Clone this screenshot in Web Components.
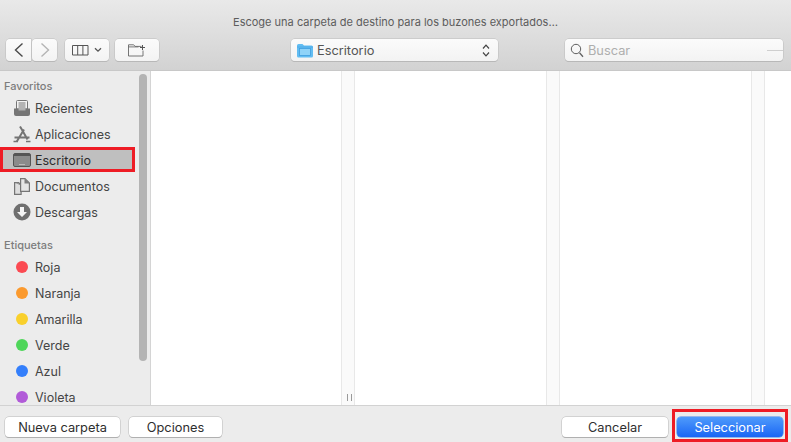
<!DOCTYPE html>
<html lang="es">
<head>
<meta charset="utf-8">
<title>Escoge una carpeta</title>
<style>
  html, body { margin: 0; height: 100%; }
  body { font-family: Inter, "Liberation Sans", sans-serif; overflow: hidden; }
</style>
</head>
<body>
<save-dialog title-text="Escoge una carpeta de destino para los buzones exportados…">
  <tool-bar slot="toolbar"></tool-bar>
  <side-bar slot="sidebar"></side-bar>
  <column-browser slot="content"></column-browser>
  <dialog-footer slot="footer"></dialog-footer>
</save-dialog>

<script>
const ICONS = {
    back: `<svg width="12" height="16" viewBox="0 0 12 16"><path d="M9.5 1.5 2.5 8l7 6.5" fill="none" stroke="#4a4a4a" stroke-width="1.4"/></svg>`,
    forward: `<svg width="12" height="16" viewBox="0 0 12 16"><path d="M2.500 1.500 9.500 8l-7 6.500" fill="none" stroke="#b4b4b4" stroke-width="1.4"/></svg>`,
    columns: `<svg width="17" height="11" viewBox="0 0 17 11"><path d="M.5.5h15.500v9.500H.5zM5.700.5v9.500M10.900.5v9.500" fill="none" stroke="#555" stroke-width="1"/></svg>`,
    chevron: `<svg width="8" height="6" viewBox="0 0 8 6"><path d="M1 1.200l3 3 3-3" fill="none" stroke="#555" stroke-width="1.3"/></svg>`,
    newFolder: `<svg width="18" height="13" viewBox="0 0 18 13"><path d="M.5 12V.8h5.200l1.400 1.600h6.400M.5 2.900h10M.5 12h14.500V6.500" fill="none" stroke="#666" stroke-width=".9"/><path d="M14.500 1v5M12 3.500h5" fill="none" stroke="#555" stroke-width="1"/></svg>`,
    folder: `<svg width="16" height="15" viewBox="0 0 16 15"><path d="M0 2.500Q0 1 1.500 1h4L7 2.500h7.500Q16 2.500 16 4v9q0 1.500-1.500 1.500h-13Q0 14.500 0 13z" fill="#62bdf2"/><path d="M0 4h16" stroke="#4aa6e4" stroke-width=".8"/><rect x="2.500" y="5.500" width="11" height="7" fill="#8fd3f8" stroke="#3f9fdf" stroke-width=".8"/></svg>`,
    updown: `<svg width="8" height="15" viewBox="0 0 8 15"><path d="M1 5.500 4 2.200l3 3.300M1 9.500l3 3.300 3-3.300" fill="none" stroke="#444" stroke-width="1.2"/></svg>`,
    search: `<svg width="14" height="15" viewBox="0 0 14 15"><circle cx="6" cy="6" r="4.700" fill="none" stroke="#5f5f5f" stroke-width="1"/><path d="M9.500 9.800 13 13.800" stroke="#5f5f5f" stroke-width="1.300"/></svg>`,
    recents: `<svg width="16" height="16" viewBox="0 0 16 16"><path d="M2.500 1.500Q2.500.5 3.500.5h9q1 0 1 1V9h-11z" fill="#f2f2f2" stroke="#757575"/><path d="M4.500 3h7M4.500 5h7M4.500 7h7" stroke="#757575"/><path d="M0 8.500h4.500v1.700h7V8.500H16v5.500q0 2-2 2H2q-2 0-2-2z" fill="#757575"/></svg>`,
    apps: `<svg width="18" height="17" viewBox="0 0 18 17"><path d="M7 .5 8.700 3.200 14.500 13.500M11 3.500 3.800 15.500M1.500 11.500h15" fill="none" stroke="#747474" stroke-width="2"/><path d="M.5 15.500h4.500M13 15.500h4.500" stroke="#747474" stroke-width="1.600"/></svg>`,
    desktop: `<svg width="18" height="14" viewBox="0 0 18 14"><rect x=".5" y=".5" width="17" height="13" rx="1.500" fill="#8b8b8b" stroke="#555"/><rect x="1" y="1" width="16" height="2" fill="#555"/><path d="M6.500 11.500h5" stroke="#e8e8e8" stroke-width="1" stroke-dasharray="1 1"/></svg>`,
    docs: `<svg width="16" height="17" viewBox="0 0 16 17"><path d="M.6 4.600h4l2.500 2.500v9.300H.6z" fill="#dedede" stroke="#757575" stroke-width="1.200"/><path d="M6.600 .6H11l4.400 4.400v8.400H6.600z" fill="#e6e6e6" stroke="#757575" stroke-width="1.200"/><path d="M10.500.5v5h5z" fill="#808080"/><path d="M.6 4.600h4v2.500h2.500z" fill="#808080"/></svg>`,
    downloads: `<svg width="18" height="18" viewBox="0 0 18 18"><circle cx="9" cy="9" r="8.500" fill="#6f6f6f"/><path d="M7 4h4v5h3l-5 5-5-5h3z" fill="#f4f4f4"/></svg>`
};

/** Frame of the sheet: toolbar on top, sidebar and columns, footer */
class SaveDialog extends HTMLElement {
    constructor() {
        super();
        this.attachShadow({ mode: "open" });
        this.shadowRoot.innerHTML = `
        <style>
          :host { display: flex; flex-direction: column; width: 791px; height: 442px; overflow: hidden; }
          header {
            height: 71px; box-sizing: border-box; flex: none;
            background: linear-gradient(#e9e9e9, #d2d2d2);
            border-bottom: 1px solid #c8c8c8;
          }
          .title {
            height: 39px; box-sizing: border-box; padding-top: 15px;
            text-align: center; font-size: 11px; line-height: 14px; color: #5c5c5c;
          }
          main { flex: 1; display: flex; min-height: 0; }
        </style>
        <header>
          <div class="title"></div>
          <slot name="toolbar"></slot>
        </header>
        <main>
          <slot name="sidebar"></slot>
          <slot name="content"></slot>
        </main>
        <slot name="footer"></slot>`;
        this.shadowRoot.querySelector(".title").textContent = this.getAttribute("title-text");
    }
}

/** Small rounded toolbar control */
class ToolButton extends HTMLElement {
    constructor() {
        super();
        this.attachShadow({ mode: "open" });
        this.shadowRoot.innerHTML = `
        <style>
          :host {
            display: flex; align-items: center; justify-content: center; gap: var(--gap, 0);
            box-sizing: border-box; height: 22px;
            background: linear-gradient(#fbfbfb, #f3f3f3);
            border-radius: 4px;
            box-shadow: 0 0 0 .5px #bcbcbc, 0 1px 0 #b4b4b4;
          }
        </style>
        <slot></slot>`;
    }
}

class ToolBar extends HTMLElement {
    constructor() {
        super();
        this.attachShadow({ mode: "open" });
        this.shadowRoot.innerHTML = `
        <style>
          :host { display: flex; height: 22px; padding: 0 8px 0 6px; }
          .back { width: 25px; border-radius: 4px 0 0 4px; }
          .forward { width: 25px; margin-left: 1px; }
          .view { width: 44px; margin-left: 8px; --gap: 5px; }
          .add { width: 44px; margin-left: 6px; }
          .path {
            width: 207px; margin-left: 132px; justify-content: flex-start; padding: 0 8px 0 6px;
            font-size: 12.8px; color: #555; gap: 4px;
          }
          .path span { flex: 1; }
          .search {
            width: 218px; margin-left: 67px; justify-content: flex-start; padding-left: 5px; gap: 4px;
            position: relative; font-size: 12.8px; color: #aeaeae;
          }
          .search i { position: absolute; right: 0; top: 11px; width: 16px; height: 1px; background: #cfcfcf; }
        </style>
        <tool-button class="back">${ICONS.back}</tool-button>
        <tool-button class="forward">${ICONS.forward}</tool-button>
        <tool-button class="view">${ICONS.columns}${ICONS.chevron}</tool-button>
        <tool-button class="add">${ICONS.newFolder}</tool-button>
        <tool-button class="path">${ICONS.folder}<span>Escritorio</span>${ICONS.updown}</tool-button>
        <tool-button class="search">${ICONS.search}<span>Buscar</span><i></i></tool-button>`;
    }
}

/** One row of the sidebar, icon slot plus label */
class SideItem extends HTMLElement {
    constructor() {
        super();
        this.attachShadow({ mode: "open" });
        const tag = this.getAttribute("tag");
        const dot = tag ? `<i style="background:${tag}"></i>` : "";
        this.shadowRoot.innerHTML = `
        <style>
          :host {
            display: flex; align-items: center; box-sizing: border-box;
            height: 26px; padding-left: 13px; font-size: 12.5px; color: #454545;
          }
          :host([selected]) {
            height: 25px; margin: 0 15px 1px 0; padding: 1px 0 0 10px; color: #2c2c2c;
            background: #bfbfbf; border: 3px solid #ee1c25;
          }
          .icon { width: 18px; display: flex; justify-content: center; margin-right: 4px; }
          i { display: block; width: 12px; height: 12px; border-radius: 50%; margin-right: 1px; }
        </style>
        <div class="icon">${dot}<slot></slot></div><span></span>`;
        this.shadowRoot.querySelector("span").textContent = this.getAttribute("label");
    }
}

class SideBar extends HTMLElement {
    constructor() {
        super();
        this.attachShadow({ mode: "open" });
        this.shadowRoot.innerHTML = `
        <style>
          :host {
            display: block; position: relative; width: 151px; height: 100%; box-sizing: border-box; flex: none;
            background: #ececec; border-right: 1px solid #d4d4d4; overflow: hidden;
          }
          h4 {
            margin: 0; padding-left: 4px; height: 18px; font-size: 11px; line-height: 18px;
            font-weight: 500; color: #7d7d7d;
          }
          .fav { margin-top: 6px; }
          .tags { margin-top: 11px; }
          .thumb { position: absolute; left: 139px; top: 3px; width: 8px; height: 287px; border-radius: 4px; background: #b4b4b4; }
        </style>
        <h4 class="fav">Favoritos</h4>
        <side-item label="Recientes">${ICONS.recents}</side-item>
        <side-item label="Aplicaciones">${ICONS.apps}</side-item>
        <side-item label="Escritorio" selected>${ICONS.desktop}</side-item>
        <side-item label="Documentos">${ICONS.docs}</side-item>
        <side-item label="Descargas">${ICONS.downloads}</side-item>
        <h4 class="tags">Etiquetas</h4>
        <side-item label="Roja" tag="#fb4a52"></side-item>
        <side-item label="Naranja" tag="#fb9a2e"></side-item>
        <side-item label="Amarilla" tag="#f9d02c"></side-item>
        <side-item label="Verde" tag="#4fd65a"></side-item>
        <side-item label="Azul" tag="#347ffb"></side-item>
        <side-item label="Violeta" tag="#b15bd8"></side-item>
        <div class="thumb"></div>`;
    }
}

/** White browser columns with resize gutters between them */
class ColumnBrowser extends HTMLElement {
    constructor() {
        super();
        this.attachShadow({ mode: "open" });
        this.shadowRoot.innerHTML = `
        <style>
          :host { display: flex; flex: 1; width: 640px; height: 100%; background: #fff; }
          .col { width: 191px; flex: none; }
          .first { width: 190px; }
          .last { width: 26px; }
          .gutter {
            position: relative; width: 12px; flex: none; background: #fafafa;
            border-left: 1px solid #e8e8e8; border-right: 1px solid #e8e8e8;
          }
          .gutter b { position: absolute; bottom: 4px; left: 5px; width: 1px; height: 7px; background: #9a9a9a; box-shadow: 4px 0 0 #9a9a9a; }
        </style>
        <div class="col first"></div>
        <div class="gutter"><b></b></div>
        <div class="col"></div>
        <div class="gutter"></div>
        <div class="col"></div>
        <div class="gutter"></div>
        <div class="col last"></div>`;
    }
}

/** Bottom bar push button */
class PushButton extends HTMLElement {
    constructor() {
        super();
        this.attachShadow({ mode: "open" });
        this.shadowRoot.innerHTML = `
        <style>
          :host {
            display: flex; align-items: center; justify-content: center; box-sizing: border-box;
            position: relative; height: 20px; font-size: 12.8px; color: #2e2e2e;
            background: #fff; border-radius: 4px;
            box-shadow: 0 0 0 .5px #b8b8b8, 0 1px 0 #a8a8a8;
          }
          :host([primary]) {
            color: #fff; background: linear-gradient(#4f9bfb, #1a66f5);
            box-shadow: 0 0 0 .5px #3f82ec;
          }
          /* red annotation frame around the primary button */
          :host([primary])::after {
            content: ""; position: absolute; top: -8px; right: -5px; bottom: -5px; left: -5px;
            border: 3px solid #ee1c25;
          }
        </style>
        <slot></slot>`;
    }
}

class DialogFooter extends HTMLElement {
    constructor() {
        super();
        this.attachShadow({ mode: "open" });
        this.shadowRoot.innerHTML = `
        <style>
          :host {
            display: flex; align-items: flex-start; box-sizing: border-box; flex: none;
            height: 37px; padding: 11px 8px 0 5px; background: #ececec; border-top: 1px solid #d2d2d2;
          }
          .spring { flex: 1; }
        </style>
        <push-button style="width:115px">Nueva carpeta</push-button>
        <push-button style="width:93px;margin-left:9px">Opciones</push-button>
        <div class="spring"></div>
        <push-button style="width:106px">Cancelar</push-button>
        <push-button style="width:106px;margin-left:9px" primary>Seleccionar</push-button>`;
    }
}

customElements.define("save-dialog", SaveDialog);
customElements.define("tool-button", ToolButton);
customElements.define("tool-bar", ToolBar);
customElements.define("side-item", SideItem);
customElements.define("side-bar", SideBar);
customElements.define("column-browser", ColumnBrowser);
customElements.define("push-button", PushButton);
customElements.define("dialog-footer", DialogFooter);
</script>
</body>
</html>
